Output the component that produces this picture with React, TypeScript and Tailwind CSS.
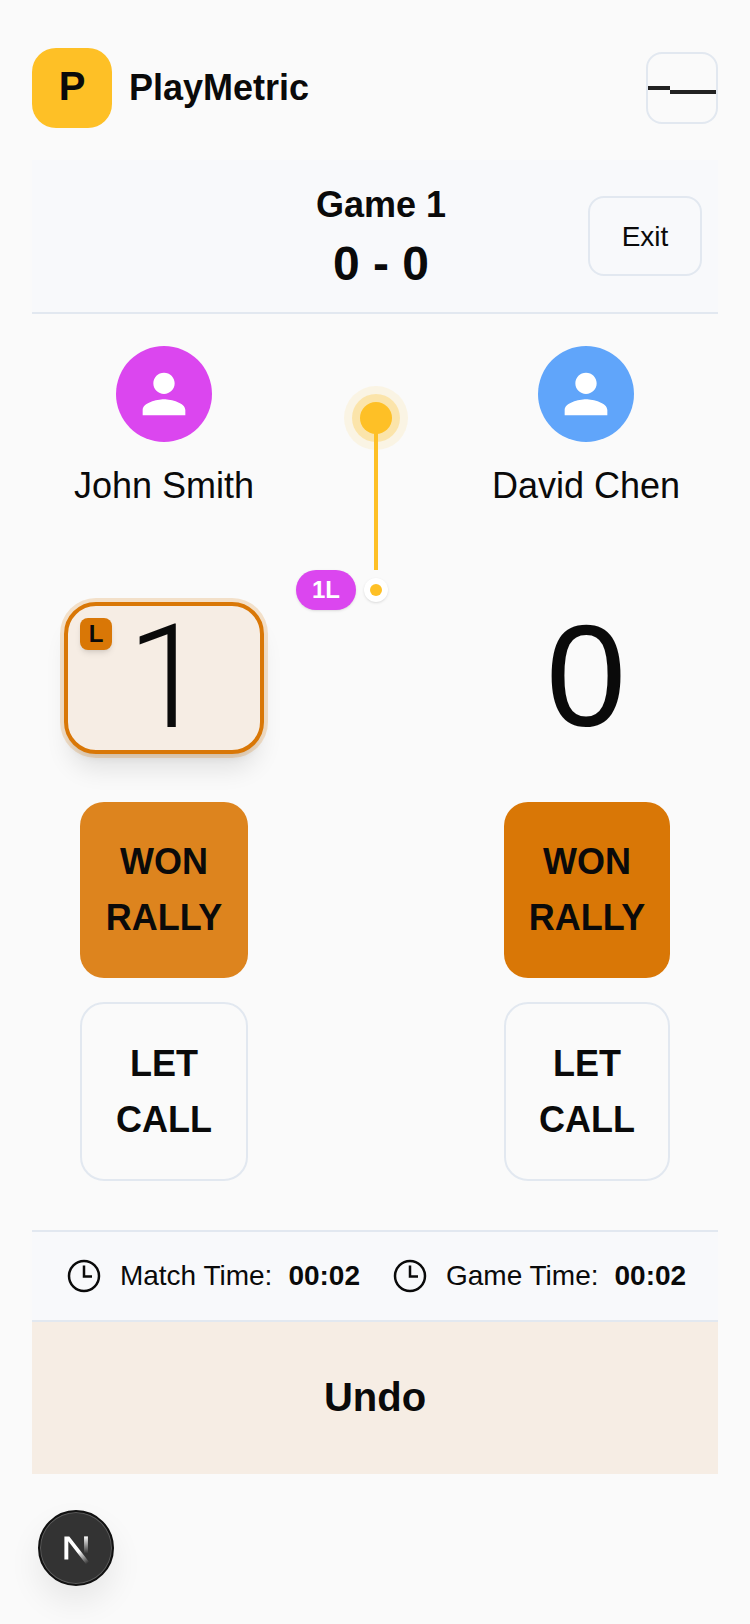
import React from 'react';

const sans = "font-['Liberation_Sans',Arial,sans-serif]";

const Avatar = ({ color }: { color: string }) => (
  <div className={`flex h-24 w-24 items-center justify-center rounded-full ${color}`}>
    <svg viewBox="0 0 24 24" className="h-16 w-16 fill-white">
      <path d="M12 12c2.21 0 4-1.79 4-4s-1.79-4-4-4-4 1.79-4 4 1.79 4 4 4zm0 2c-2.67 0-8 1.34-8 4v2h16v-2c0-2.66-5.33-4-8-4z" />
    </svg>
  </div>
);

const ActionButton = ({ top, bottom, className }: { top: string; bottom: string; className: string }) => (
  <button className={`flex flex-col items-center justify-center rounded-[24px] text-[36px] leading-[56px] font-bold ${className}`}>
    <span>{top}</span>
    <span>{bottom}</span>
  </button>
);

const ClockIcon = () => (
  <svg viewBox="0 0 36 36" className="h-9 w-9 fill-none stroke-[#0a0a0a] stroke-[2.5]">
    <circle cx="18" cy="18" r="15" />
    <path d="M18 7.5v11h8" />
  </svg>
);

const Timer = ({ label, value }: { label: string; value: string }) => (
  <div className="flex items-center">
    <ClockIcon />
    <span className="ml-[18px] text-[28px]">{label}</span>
    <span className="ml-4 text-[28px] font-bold">{value}</span>
  </div>
);

const App = () => {
  return (
    <div className={`relative flex h-[1624px] w-[750px] flex-col overflow-hidden bg-[#fafafa] px-8 pt-12 text-[#0a0a0a] ${sans}`}>
      <header className="flex h-20 items-center justify-between">
        <div className="flex items-center">
          <div className="flex h-20 w-20 items-center justify-center rounded-[24px] bg-[#fec026] pb-1 text-[40px] font-bold">P</div>
          <span className="ml-[17px] text-[36px] font-bold">PlayMetric</span>
        </div>
        <button className="flex h-[72px] w-[72px] items-center rounded-2xl border-2 border-[#e2e8f0]">
          <span className="h-1 w-[22px] bg-[#222222]" />
          <span className="mt-2 h-1 w-[46px] bg-[#222222]" />
        </button>
      </header>

      <section className="relative mt-8 flex h-[154px] flex-col items-center border-b-2 border-[#e2e8f0] bg-[#f8f9fb] pt-[23px] pl-[12px]">
        <div className="text-[36px] leading-[44px] font-bold">Game 1</div>
        <div className="mt-[7px] text-[48px] leading-[60px] font-bold">0 - 0</div>
        <button className="absolute top-9 right-4 flex h-20 w-[114px] items-center justify-center rounded-2xl border-2 border-[#e2e8f0] pt-0.5 text-[28px]">
          Exit
        </button>
      </section>

      <main className="relative flex h-[916px] justify-between">
        <div className="flex w-[264px] flex-col items-center pt-8">
          <Avatar color="bg-[#db46ef]" />
          <div className="mt-[22px] text-[36px] leading-[44px]">John Smith</div>
          <div className="relative mt-[94px] flex h-[152px] w-[200px] items-center justify-center rounded-[32px] border-4 border-[#d97706] bg-[#f6ede4] shadow-[0_0_0_4px_rgba(217,119,6,0.2),0_20px_25px_-5px_rgba(0,0,0,0.1),0_8px_10px_-6px_rgba(0,0,0,0.1)]">
            <span className="ml-[6px] font-['Roboto',sans-serif] text-[144px] leading-none font-[350]">1</span>
            <span className="absolute top-3 left-3 flex h-8 w-8 items-center justify-center rounded-lg bg-[#d97706] text-[24px] font-bold shadow-md">L</span>
          </div>
          <ActionButton top="WON" bottom="RALLY" className="mt-12 h-[176px] w-[168px] bg-[#d97706]/90" />
          <ActionButton top="LET" bottom="CALL" className="mt-6 h-[179px] w-[168px] border-2 border-[#e2e8f0]" />
        </div>

        {/* server indicator */}
        <div className="absolute top-[88px] left-[344px] h-0 w-0">
          <div className="absolute top-[-16px] left-[-32px] h-16 w-16 rounded-full bg-[#fec026]/10" />
          <div className="absolute top-[-8px] left-[-24px] h-12 w-12 rounded-full bg-[#fec026]/30" />
          <div className="absolute top-0 left-[-16px] h-8 w-8 rounded-full bg-[#fec026]" />
          <div className="absolute top-[30px] left-[-2px] h-[138px] w-1 bg-[#fec026]" />
          <div className="absolute top-[168px] left-[-80px] flex h-10 w-[60px] items-center justify-center rounded-[20px] bg-[#db46ef] text-[24px] font-bold text-white shadow-sm">1L</div>
          <div className="absolute top-[176px] left-[-12px] flex h-6 w-6 items-center justify-center rounded-full bg-white shadow-sm">
            <div className="h-3 w-3 rounded-full bg-[#fec026]" />
          </div>
        </div>

        <div className="flex w-[264px] flex-col items-center pt-8">
          <Avatar color="bg-[#60a5fa]" />
          <div className="mt-[22px] text-[36px] leading-[44px]">David Chen</div>
          <div className="mt-[94px] flex h-[152px] w-[200px] items-center justify-center">
            <span className="-mt-0.5 text-[144px] leading-none">0</span>
          </div>
          <ActionButton top="WON" bottom="RALLY" className="mt-12 ml-0.5 h-[176px] w-[166px] bg-[#d97706]" />
          <ActionButton top="LET" bottom="CALL" className="mt-6 ml-0.5 h-[179px] w-[166px] border-2 border-[#e2e8f0]" />
        </div>
      </main>

      <section className="flex h-[92px] items-center justify-center gap-[32px] border-y-2 border-[#e2e8f0] bg-[#f8f9fb] pl-[2px]">
        <Timer label="Match Time:" value="00:02" />
        <Timer label="Game Time:" value="00:02" />
      </section>

      <button className="h-[152px] bg-[#f6ede4] pb-0.5 text-[40px] font-bold">Undo</button>

      {/* dev tools badge */}
      <div className="absolute top-[1510px] left-[38px] flex h-[76px] w-[76px] items-center justify-center rounded-full border-2 border-[#111111] bg-[#333333] shadow-[0_16px_32px_rgba(0,0,0,0.08),inset_0_0_0_1px_rgba(255,255,255,0.2)]">
        <svg viewBox="0 0 180 180" className="h-[58px] w-[58px]">
          <defs>
            <linearGradient id="nx" x1="100" y1="100" x2="128" y2="136" gradientUnits="userSpaceOnUse">
              <stop stopColor="white" />
              <stop offset="1" stopColor="white" stopOpacity="0" />
            </linearGradient>
            <linearGradient id="nb" x1="121" y1="54" x2="120.8" y2="106.9" gradientUnits="userSpaceOnUse">
              <stop stopColor="white" />
              <stop offset="1" stopColor="white" stopOpacity="0" />
            </linearGradient>
          </defs>
          <path d="M149.508 157.52L69.142 54H54V125.97H66.114V69.384L139.999 164.845C143.333 162.614 146.509 160.165 149.508 157.52Z" fill="url(#nx)" />
          <rect x="115" y="54" width="12" height="72" fill="url(#nb)" />
        </svg>
      </div>
    </div>
  );
};

export default App;
